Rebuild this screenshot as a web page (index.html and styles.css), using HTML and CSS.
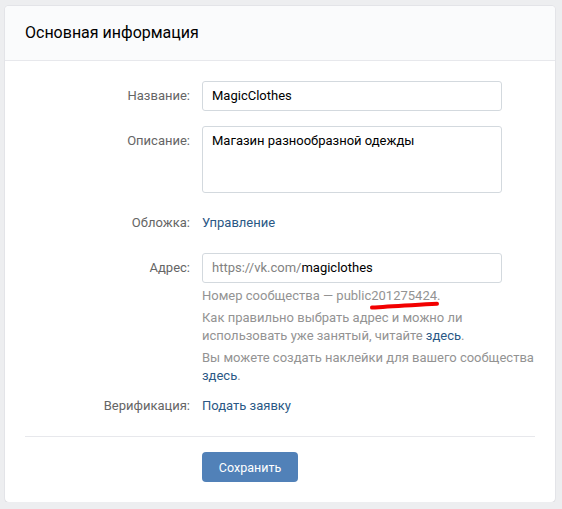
FILE: index.html
```html
<!DOCTYPE html>
<html lang="ru">
<head>
<meta charset="utf-8">
<link rel="stylesheet" href="styles.css">
</head>
<body>
<div class="card">
  <div class="card-header">Основная информация</div>
  <div class="card-body">
    <div class="row">
      <div class="label">Название:</div>
      <div class="field"><div class="input">MagicClothes</div></div>
    </div>
    <div class="row">
      <div class="label">Описание:</div>
      <div class="field"><div class="input textarea">Магазин разнообразной одежды</div></div>
    </div>
    <div class="row">
      <div class="label">Обложка:</div>
      <div class="field text"><a class="link">Управление</a></div>
    </div>
    <div class="row">
      <div class="label">Адрес:</div>
      <div class="field">
        <div class="input"><span class="prefix">https://vk.com/</span>magiclothes</div>
        <div class="help">
          <p>Номер сообщества — public<span class="marked">201275424<svg class="scribble" width="72" height="12" viewBox="0 0 72 12"><path d="M3 8.6 C 20 7.2, 40 6.4, 68 4.8" stroke="#f20000" stroke-width="4" fill="none" stroke-linecap="round"/></svg></span>.</p>
          <p>Как правильно выбрать адрес и можно ли использовать уже занятый, читайте <a class="link">здесь</a>.</p>
          <p>Вы можете создать наклейки для вашего сообщества <a class="link">здесь</a>.</p>
        </div>
      </div>
    </div>
    <div class="row verify">
      <div class="label">Верификация:</div>
      <div class="field text"><a class="link">Подать заявку</a></div>
    </div>
    <div class="separator"></div>
    <div class="actions">
      <button class="btn">Сохранить</button>
    </div>
  </div>
</div>
</body>
</html>
```

FILE: styles.css
```css
html, body {
  margin: 0;
  padding: 0;
}
body {
  background: #edeef0;
  font-family: Roboto, "Open Sans", "DejaVu Sans", sans-serif;
  font-size: 13px;
  color: #000;
  padding: 6px 7px 0 5px;
  width: 550px;
}
.card {
  background: #fff;
  border-radius: 4px;
  box-shadow: 0 1px 0 0 #d7d8db, 0 0 0 1px #e3e4e8;
  overflow: hidden;
}
.card-header {
  background: #fafbfc;
  border-bottom: 1px solid #e7e8ec;
  height: 54px;
  line-height: 54px;
  padding-left: 20px;
  font-size: 16px;
  color: #000;
}
.card-body {
  padding: 20px 20px 20px 0;
  display: flex;
  flex-direction: column;
  gap: 15px;
}
.row {
  display: grid;
  grid-template-columns: 197px 300px;
}
.label {
  text-align: right;
  padding-right: 12px;
  line-height: 30px;
  color: #656565;
  white-space: nowrap;
}
.field.text {
  line-height: 30px;
}
.input {
  box-sizing: border-box;
  height: 30px;
  line-height: 28px;
  border: 1px solid #d3d9de;
  border-radius: 3px;
  padding: 0 9px;
  background: #fff;
  color: #000;
  white-space: nowrap;
}
.textarea {
  height: 67px;
  line-height: 16px;
  padding-top: 6px;
}
.prefix {
  color: #828282;
}
.link {
  color: #2a5885;
  text-decoration: none;
}
.help {
  color: #939393;
  margin-top: 4px;
  width: 340px;
}
.help p {
  margin: 0 0 4px 0;
  line-height: 18px;
}
.help p:last-child {
  margin-bottom: 0;
}
.marked {
  position: relative;
}
.scribble {
  position: absolute;
  left: -2px;
  top: 11px;
}
.verify {
  margin-top: -9px;
}
.separator {
  height: 1px;
  background: #e7e8ec;
  margin-left: 20px;
}
.actions {
  padding-left: 197px;
}
.btn {
  box-sizing: border-box;
  width: 96px;
  height: 30px;
  border: 0;
  border-radius: 4px;
  background: #5181b8;
  color: #fff;
  font-family: Roboto, "Open Sans", sans-serif;
  font-size: 12.5px;
  padding: 0;
}
```
